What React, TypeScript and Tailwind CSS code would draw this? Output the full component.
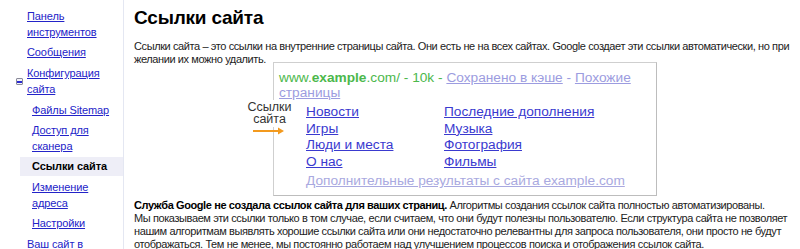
import React from "react";

const linkCls = "text-[#2323c8] underline";

function Minus() {
  return (
    <span className="absolute left-[16px] top-[13px] w-[7px] h-[7px] border border-[#8a8a9a] rounded-[1px] bg-[#f4f4f8] flex items-center justify-center">
      <span className="block w-[5px] h-[2px] bg-[#2a2ad0]" />
    </span>
  );
}

export default function App() {
  return (
    <div
      className="w-[800px] h-[249px] overflow-hidden bg-white flex text-[11px] text-[#111]"
      style={{ fontFamily: '"Liberation Sans", Arial, sans-serif' }}
    >
      {/* Sidebar */}
      <div className="w-[124px] shrink-0 border-r border-[#e4e7f2] pt-[8px] leading-[16px] text-[11px] tracking-[-0.1px]">
        <div className="pl-[27px]">
          <a className={linkCls}>Панель<br />инструментов</a>
        </div>
        <div className="pl-[27px] mt-[4px]">
          <a className={linkCls}>Сообщения</a>
        </div>
        <div className="relative pl-[27px] mt-[5px]">
          <Minus />
          <a className={linkCls}>Конфигурация<br />сайта</a>
        </div>
        <div className="pl-[32px] mt-[5px]">
          <a className={linkCls}>Файлы Sitemap</a>
        </div>
        <div className="pl-[32px] mt-[4px]">
          <a className={linkCls}>Доступ для<br />сканера</a>
        </div>
        <div className="ml-[20px] pl-[12px] mt-[3px] bg-[#eeeef7] py-[1px] leading-[17px] font-bold text-black">
          Ссылки сайта
        </div>
        <div className="pl-[32px] mt-[3px]">
          <a className={linkCls}>Изменение<br />адреса</a>
        </div>
        <div className="pl-[32px] mt-[4px]">
          <a className={linkCls}>Настройки</a>
        </div>
        <div className="relative pl-[27px] mt-[5px]">
          <Minus />
          <a className={linkCls}>Ваш сайт в</a>
        </div>
      </div>

      {/* Main */}
      <div className="pl-[10px] flex-1 min-w-0">
        <h1 className="text-[19px] leading-[24px] font-bold text-black mt-[6px] tracking-[-0.2px]">Ссылки сайта</h1>
        <p className="mt-[10px] leading-[13px] whitespace-nowrap text-[#222] tracking-[-0.4px]">
          Ссылки сайта – это ссылки на внутренние страницы сайта. Они есть не на всех сайтах. Google создает эти ссылки автоматически, но при
          <br />
          желании их можно удалить.
        </p>

        <div className="relative ml-[139px] mt-[-4px] w-[384px] h-[134px] border border-[#cfcfcf] border-r-[#bdbdbd] border-b-[#bdbdbd] pl-[5px] pt-[7px] text-[13.7px] leading-[15px]">
          <div className="whitespace-nowrap">
            <span className="text-[#4cb84c]">
              www.<b>example</b>.com/ - 10k -{" "}
            </span>
            <span className="text-[#9c9ce0] underline">Сохранено в кэше</span>
            <span className="text-[#9c9ce0]"> - </span>
            <span className="text-[#9c9ce0] underline">Похожие</span>
          </div>
          <div>
            <span className="text-[#9c9ce0] underline">страницы</span>
          </div>

          <div className="ml-[27px] mt-[4.25px] grid grid-cols-[138px_1fr] leading-[16.5px] text-[#3a3acf]">
            <a className="underline">Новости</a>
            <a className="underline">Последние дополнения</a>
            <a className="underline">Игры</a>
            <a className="underline">Музыка</a>
            <a className="underline">Люди и места</a>
            <a className="underline">Фотография</a>
            <a className="underline">О нас</a>
            <a className="underline">Фильмы</a>
          </div>
          <div className="ml-[27px] mt-[3px] leading-[16px] text-[#a9a9e0] underline">
            Дополнительные результаты с сайта example.com
          </div>

          {/* label + arrow overlay */}
          <div className="absolute left-[-27px] top-[37px] bg-white text-[12.5px] leading-[12px] text-[#333] text-center w-[45px] pt-[1px] pb-[2px]">
            Ссылки
            <br />
            сайта
          </div>
          <svg className="absolute left-[-21px] top-[64px]" width="32" height="8" viewBox="0 0 32 8">
            <line x1="0" y1="4" x2="27" y2="4" stroke="#f39a1e" strokeWidth="2" />
            <path d="M25 0.5 L31 4 L25 7.5 Z" fill="#f39a1e" />
          </svg>
        </div>

        <p className="mt-[3px] leading-[13px] whitespace-nowrap text-[#222] tracking-[-0.4px]">
          <b className="text-black">Служба Google не создала ссылок сайта для ваших страниц.</b> Алгоритмы создания ссылок сайта полностью автоматизированы.
          <br />
          Мы показываем эти ссылки только в том случае, если считаем, что они будут полезны пользователю. Если структура сайта не позволяет
          <br />
          нашим алгоритмам выявлять хорошие ссылки сайта или они недостаточно релевантны для запроса пользователя, они просто не будут
          <br />
          отображаться. Тем не менее, мы постоянно работаем над улучшением процессов поиска и отображения ссылок сайта.
        </p>
      </div>
    </div>
  );
}
